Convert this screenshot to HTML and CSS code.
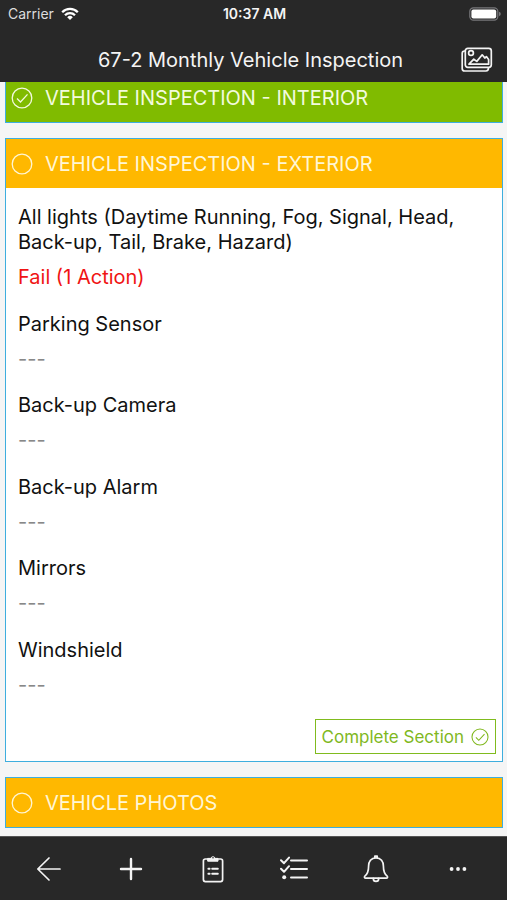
FILE: index.html
```html
<!DOCTYPE html>
<html lang="en">
<head>
<meta charset="utf-8">
<meta name="viewport" content="width=device-width, initial-scale=1">
<title>67-2 Monthly Vehicle Inspection</title>
<link rel="stylesheet" href="styles.css">
</head>
<body>
<header class="top">
  <div class="status">
    <span class="carrier">Carrier
      <svg width="18" height="14" viewBox="0 0 18 14" fill="none" stroke="#fff" stroke-width="2.3"><path d="M1.2 5.2a11 11 0 0 1 15.6 0M4 8.2a7 7 0 0 1 10 0"/><path d="M9 13 6.2 10.2a4 4 0 0 1 5.6 0z" fill="#fff" stroke="none"/></svg>
    </span>
    <span class="time">10:37 AM</span>
    <span class="battery">
      <svg width="32" height="14" viewBox="0 0 32 14"><rect x=".8" y=".8" width="28" height="12.4" rx="3.6" fill="none" stroke="#77777a" stroke-width="1.2"/><rect x="2.4" y="2.4" width="24.8" height="9.2" rx="2" fill="#fff"/><path d="M30 4.8q1.8.6 1.8 2.2T30 9.2z" fill="#77777a"/></svg>
    </span>
  </div>
  <div class="title-bar">
    <h1>67-2 Monthly Vehicle Inspection</h1>
    <button class="icon-button gallery" aria-label="Photos">
      <svg width="32" height="26" viewBox="0 0 32 26" fill="none" stroke="#f4f4f4" stroke-width="1.7" stroke-linejoin="round" stroke-linecap="round"><rect x="4.3" y="1.3" width="26" height="19" rx="2.5"/><path d="M4.3 4H3.5Q1.2 4 1.2 6.5v15Q1.2 24 3.7 24H25q2.5 0 2.5-3.2"/><path d="M8 17.2l4.8-5 3 2.2 5.4-6.6 2.6 3.2 1.6-1.4 2.2 3v4.6z"/><circle cx="10" cy="6" r="2.4"/></svg>
    </button>
  </div>
</header>

<main class="sections">
  <section class="card">
    <h2 class="card-head done">
      <svg class="mark" viewBox="0 0 22 22"><circle cx="11" cy="11" r="9.8"/><path d="M6 11.5l3.5 3.5 7-7.6"/></svg>
      <span>VEHICLE INSPECTION - INTERIOR</span>
    </h2>
  </section>

  <section class="card open">
    <h2 class="card-head">
      <svg class="mark" viewBox="0 0 22 22"><circle cx="11" cy="11" r="9.8"/></svg>
      <span>VEHICLE INSPECTION - EXTERIOR</span>
    </h2>
    <dl class="items">
      <div class="item"><dt>All lights (Daytime Running, Fog, Signal, Head, Back-up, Tail, Brake, Hazard)</dt><dd class="fail">Fail (1 Action)</dd></div>
      <div class="item"><dt>Parking Sensor</dt><dd>---</dd></div>
      <div class="item"><dt>Back-up Camera</dt><dd>---</dd></div>
      <div class="item"><dt>Back-up Alarm</dt><dd>---</dd></div>
      <div class="item"><dt>Mirrors</dt><dd>---</dd></div>
      <div class="item"><dt>Windshield</dt><dd>---</dd></div>
    </dl>
    <button class="complete"><span>Complete Section</span>
      <svg width="18" height="18" viewBox="0 0 22 22" fill="none" stroke="currentColor" stroke-width="1.3"><circle cx="11" cy="11" r="9.8"/><path d="M6 11.5l3.5 3.5 7-7.6"/></svg>
    </button>
  </section>

  <section class="card">
    <h2 class="card-head">
      <svg class="mark" viewBox="0 0 22 22"><circle cx="11" cy="11" r="9.8"/></svg>
      <span>VEHICLE PHOTOS</span>
    </h2>
  </section>
</main>

<nav class="toolbar">
  <button class="icon-button" aria-label="Back"><svg width="28" height="28" viewBox="0 0 28 28"><path d="M25 14H3M14 3 2.800 14 14 25"/></svg></button>
  <button class="icon-button" aria-label="Add"><svg width="28" height="28" viewBox="0 0 28 28"><path d="M14 4v20M4 14h20" stroke-width="2.4"/></svg></button>
  <button class="icon-button" aria-label="Forms"><svg width="28" height="28" viewBox="0 0 28 28"><rect x="4.400" y="4" width="19.200" height="22.600" rx="2"/><path d="M9 3.400h2.800a2.300 2.300 0 0 1 4.400 0H19v2.800H9z" fill="#f4f4f4" stroke-width="1"/><circle cx="14" cy="2.800" r=".8" fill="#282828" stroke="none"/><path d="M9.400 13.700h1.200M9.400 18.700h1.200M13.200 13.700h5.600M13.200 18.700h5.600" stroke-width="2"/></svg></button>
  <button class="icon-button" aria-label="Checklist"><svg width="28" height="28" viewBox="0 0 28 28"><path d="M11 5.400h16M11 14h16M11 22.400h16" stroke-width="2"/><path d="M1 5.200l3 3 5-5.600M1 13.800l3 3 5-5.600" stroke-width="2"/><circle cx="4.200" cy="22.200" r="2" fill="#f4f4f4" stroke="none"/></svg></button>
  <button class="icon-button" aria-label="Notifications"><svg width="28" height="28" viewBox="0 0 28 28"><path d="M14 2.800c-5 0-7.400 3.800-7.400 8.200 0 5-1 8-3.800 10.200-.8.9-.3 2 .8 2h20.800c1.100 0 1.600-1.100.8-2-2.800-2.200-3.800-5.200-3.800-10.200 0-4.400-2.400-8.200-7.400-8.200z"/><path d="M12.800 2.600V1.200h2.400v1.400M11.300 23.400a2.700 3 0 0 0 5.400 0"/></svg></button>
  <button class="icon-button" aria-label="More"><svg width="28" height="28" viewBox="0 0 28 28"><g fill="#f4f4f4" stroke="none"><circle cx="7.600" cy="14" r="1.900"/><circle cx="14" cy="14" r="1.900"/><circle cx="20.400" cy="14" r="1.900"/></g></svg></button>
</nav>
</body>
</html>
```
FILE: styles.css
```css
* { box-sizing: border-box; }

body {
  margin: 0;
  height: 100vh;
  display: flex;
  flex-direction: column;
  background: #f5f5f5;
  color: #111;
  font-family: Inter, "Liberation Sans", sans-serif;
  font-size: 20px;
  line-height: 25px;
}

h1, h2, dl, dd { margin: 0; font-size: inherit; font-weight: 400; }
svg { display: block; flex: none; }
button { font: inherit; cursor: pointer; }

.top { background: #282828; color: #f4f4f4; flex: none; }

.status {
  display: grid;
  grid-template-columns: 1fr auto 1fr;
  align-items: center;
  height: 28px;
  padding: 0 6px 0 8px;
  font-size: 14px;
  line-height: 20px;
}
.carrier { display: flex; align-items: center; gap: 7px; color: #ddd; }
.time { font-weight: 600; }
.battery { justify-self: end; }

.title-bar {
  display: grid;
  grid-template-columns: 48px 1fr 48px;
  align-items: center;
  height: 54px;
  padding: 10px 6px 0 0;
}
.title-bar h1 { grid-column: 2; text-align: center; white-space: nowrap; }

.icon-button {
  display: flex;
  align-items: center;
  justify-content: center;
  padding: 0;
  border: 0;
  background: none;
}

.sections {
  flex: 1;
  min-height: 0;
  overflow: hidden;
  display: flex;
  flex-direction: column;
  gap: 15px;
  padding: 0 4px 8px 5px;
}

.card { flex: none; border: 1px solid #3eaede; background: #fff; }
.card:first-child { margin-top: -10px; }
.card.open { flex: 1; display: flex; flex-direction: column; }

.card-head {
  display: flex;
  align-items: center;
  gap: 12px;
  height: 49px;
  padding: 0 5px;
  background: #ffb800;
  color: #fff6d5;
}
.card-head span { padding-top: 2px; }
.card-head.done { background: #80bb00; color: #f2fadd; }
.mark { width: 22px; height: 22px; fill: none; stroke: currentColor; stroke-width: 1.3; }

.items {
  flex: 1;
  display: flex;
  flex-direction: column;
  justify-content: space-between;
  padding: 17px 12px 21px;
}
.item { display: grid; gap: 10px; }
.item dd { color: #888; }
.item dd.fail { color: #f01414; }

.complete {
  align-self: flex-end;
  display: flex;
  align-items: center;
  gap: 7px;
  height: 35px;
  margin: 0 6px 7px 0;
  padding: 0 6px;
  border: 1px solid #80bb1e;
  background: #fff;
  color: #80b81e;
  font-size: 17px;
}
.complete span { padding-top: 2px; }

.toolbar {
  flex: none;
  display: grid;
  grid-template-columns: repeat(6, 1fr);
  height: 64px;
  padding: 0 8px;
  background: #282828;
  border-top: 1px solid #555;
}
.toolbar svg {
  fill: none;
  stroke: #f4f4f4;
  stroke-width: 1.7;
  stroke-linecap: round;
  stroke-linejoin: round;
}
```
